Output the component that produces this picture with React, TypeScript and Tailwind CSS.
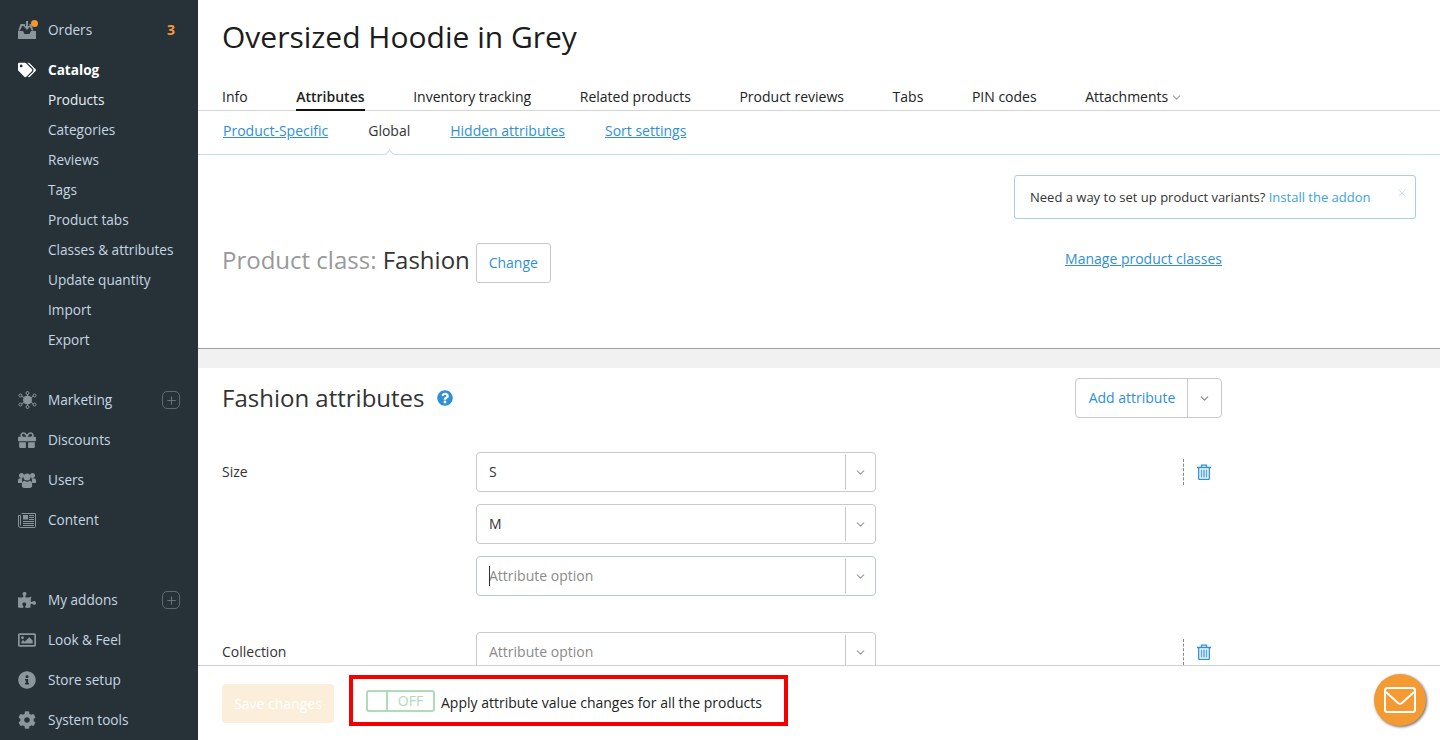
import { ReactNode } from 'react';
import { FaTags, FaGift, FaPuzzlePiece, FaRegImage, FaInfoCircle, FaCog, FaQuestionCircle } from 'react-icons/fa';
import { ChevronDown, Plus, X } from 'lucide-react';

const font = "font-['Open_Sans',sans-serif]";

const catalogItems = ['Products', 'Categories', 'Reviews', 'Tags', 'Product tabs', 'Classes & attributes', 'Update quantity', 'Import', 'Export'];
const tabs = ['Info', 'Attributes', 'Inventory tracking', 'Related products', 'Product reviews', 'Tabs', 'PIN codes'];

function OrdersIcon() {
  return (
    <svg width="18" height="18" viewBox="0 0 18 18" fill="#8a959c">
      <path d="M0 10h5l1.500 3h5l1.500-3h5v8H0z" />
      <path d="M2.500 3H7v2H4.200L2 9.500H.3zM11.500 3H13l2.500 6.500h-1.800L11.500 5z" />
      <path d="M8 0h2v5h2.500L9 9 5.500 5H8z" />
    </svg>
  );
}

function MarketingIcon() {
  return (
    <svg width="19" height="18" viewBox="0 0 19 18" fill="none" stroke="#8a959c" strokeWidth="1">
      <circle cx="9.500" cy="9" r="4" fill="#8a959c" />
      <path d="M9.500 3v3M9.500 12v3M3.500 5l3 2M15.500 5l-3 2M3.500 13l3-2M15.500 13l-3-2" />
      <circle cx="9.500" cy="2" r="1.500" />
      <circle cx="9.500" cy="16" r="1.500" />
      <circle cx="2.500" cy="4.500" r="1.500" />
      <circle cx="16.500" cy="4.500" r="1.500" />
      <circle cx="2.500" cy="13.500" r="1.500" />
      <circle cx="16.500" cy="13.500" r="1.500" />
    </svg>
  );
}

function UsersIcon() {
  return (
    <svg width="18" height="16" viewBox="0 0 18 16" fill="#8a959c">
      <circle cx="3.500" cy="3.500" r="2.500" />
      <circle cx="14.500" cy="3.500" r="2.500" />
      <path d="M0 11V8.500C0 7 1 6.300 2.500 6.300h2c-.3.600-.5 1.300-.5 2 0 1 .4 2 1 2.700H0zM18 11V8.500c0-1.500-1-2.200-2.500-2.200h-2c.3.600.5 1.300.5 2 0 1-.4 2-1 2.700h5z" />
      <circle cx="9" cy="5" r="3.500" />
      <path d="M3.800 13.500c0-3 1.200-4.800 2.700-4.800.8.600 1.600 1 2.500 1s1.700-.4 2.500-1c1.500 0 2.700 1.800 2.700 4.800 0 1.500-1 2.500-2.500 2.500h-5.400c-1.500 0-2.500-1-2.500-2.500z" />
    </svg>
  );
}

function NewspaperIcon() {
  return (
    <svg width="18" height="16" viewBox="0 0 18 16" fill="none" stroke="#8a959c" strokeWidth="1">
      <path d="M3.500 1.500h14v13a1 1 0 0 1-1 1h-14a2 2 0 0 1-2-2V3.500h2v10" />
      <rect x="5" y="3" width="5" height="4.500" fill="#8a959c" stroke="none" />
      <path d="M11 3.500h5M11 5.500h5M11 7.500h5M5 9.500h11M5 11.500h11M5 13.500h11" />
    </svg>
  );
}

function TrashIcon() {
  return (
    <svg width="14" height="16" viewBox="0 0 14 16" fill="none" stroke="#2f8fd8" strokeWidth="1.300">
      <path d="M0 3.500h14M4.500 3.500V1.200h5v2.300" />
      <path d="M1.700 3.500v11a1 1 0 0 0 1 1h8.600a1 1 0 0 0 1-1v-11" />
      <path d="M4.500 5.500v8M7 5.500v8M9.500 5.500v8" strokeWidth="1.600" stroke="#5fa9e2" />
    </svg>
  );
}

function NavRow({ icon, label, right }: { icon: ReactNode; label: string; right?: ReactNode }) {
  return (
    <div className="flex h-10 items-center pl-[18px] pr-[18px]">
      <div className="flex w-[30px] shrink-0 items-center">{icon}</div>
      <span className="flex-1 text-[13.6px] text-[#c6d6e2]">{label}</span>
      {right}
    </div>
  );
}

function PlusBox() {
  return (
    <div className="flex h-[18px] w-[18px] items-center justify-center rounded-[5px] border border-[#5d6a71]">
      <Plus size={13} color="#66737a" />
    </div>
  );
}

function Sidebar() {
  const iconClass = 'text-[#8a959c] text-[18px]';
  return (
    <aside className="flex w-[198px] shrink-0 flex-col bg-[#263238] pt-[10px]">
      <NavRow icon={<div className="relative"><OrdersIcon /><span className="absolute -right-[2px] -top-[1px] h-[7px] w-[7px] rounded-full bg-[#f5962c]" /></div>} label="Orders" right={<span className="pr-[5px] text-sm font-bold text-[#f59a33]">3</span>} />
      <div className="mt-[5px] flex h-[30px] items-center pl-[18px]">
        <div className="flex w-[30px] items-center"><FaTags className="text-[18px] text-white" /></div>
        <span className="text-[13.6px] font-bold text-white">Catalog</span>
      </div>
      <div className="flex flex-col pl-12">
        {catalogItems.map((item, i) => (
          <div key={item} className={`flex h-[30px] items-center text-[13.6px] ${i === 0 ? 'text-[#e6eef4]' : 'text-[#c6d6e2]'}`}>{item}</div>
        ))}
      </div>
      <div className="mt-[25px]">
        <NavRow icon={<MarketingIcon />} label="Marketing" right={<PlusBox />} />
        <NavRow icon={<FaGift className={iconClass} />} label="Discounts" />
        <NavRow icon={<UsersIcon />} label="Users" />
        <NavRow icon={<NewspaperIcon />} label="Content" />
      </div>
      <div className="mt-10">
        <NavRow icon={<FaPuzzlePiece className={iconClass} />} label="My addons" right={<PlusBox />} />
        <NavRow icon={<FaRegImage className={iconClass} />} label="Look & Feel" />
        <NavRow icon={<FaInfoCircle className={iconClass} />} label="Store setup" />
        <NavRow icon={<FaCog className={iconClass} />} label="System tools" />
      </div>
    </aside>
  );
}

function AttributeSelect({ value, placeholder, focused }: { value?: string; placeholder?: string; focused?: boolean }) {
  return (
    <div className={`flex h-10 w-[400px] items-center rounded-[4px] border bg-white ${focused ? 'border-[#b9c8d6]' : 'border-[#c9c9c9]'}`}>
      <div className="relative flex-1 pl-3 text-sm">
        {focused && <span className="absolute left-3 top-0 h-5 w-px bg-[#263238]" />}
        {value ? <span className="text-[#333333]">{value}</span> : <span className="text-[#8a8a8a]">{placeholder}</span>}
      </div>
      <div className="flex h-[34px] w-[30px] items-center justify-center border-l border-[#c9c9c9]">
        <ChevronDown size={13} color="#9a9a9a" />
      </div>
    </div>
  );
}

function AttributeRow({ label, children }: { label: string; children: ReactNode }) {
  return (
    <div className="flex w-[1000px]">
      <div className="flex h-10 w-[254px] items-center text-sm text-[#333333]">{label}</div>
      <div className="flex flex-col gap-3">{children}</div>
      <div className="ml-auto mt-[7px] flex h-[26px] w-[39px] items-center justify-center border-l border-dashed border-[#888888] pl-[2px]">
        <TrashIcon />
      </div>
    </div>
  );
}

export default function App() {
  return (
    <div className={`flex h-[740px] w-[1440px] overflow-hidden bg-white ${font}`}>
      <Sidebar />
      <main className="relative flex min-w-0 flex-1 flex-col">
        <div className="min-h-0 flex-1 overflow-hidden">
          <h1 className="pl-6 pt-[17px] text-[30px] leading-10 text-[#1c1c1c]">Oversized Hoodie in Grey</h1>

          <div className="mt-[26px] flex h-[28px] gap-[48.6px] border-b border-[#d5d5d5] pl-6 pt-1 text-sm text-[#222222]">
            {tabs.map((tab) => (
              <div key={tab} className={`h-[24px] leading-5 ${tab === 'Attributes' ? 'border-b-2 border-[#111111] font-semibold' : ''}`}>{tab}</div>
            ))}
            <div className="flex h-5 items-center gap-0.5">Attachments<ChevronDown size={13} color="#9a9a9a" /></div>
          </div>

          <div className="relative flex h-11 items-center gap-10 border-b border-[#c5dbe9] pb-1 pl-[25px] text-sm">
            <a className="text-[#2f8fd8] underline">Product-Specific</a>
            <span className="text-[#333333]">Global</span>
            <a className="text-[#2f8fd8] underline">Hidden attributes</a>
            <a className="text-[#2f8fd8] underline">Sort settings</a>
            <span className="absolute bottom-[-4px] left-[188px] h-[7px] w-[7px] rotate-45 border-l border-t border-[#c5dbe9] bg-white" />
          </div>

          <section className="h-[194px] border-b border-[#9e9e9e] shadow-[0_1px_2px_rgba(0,0,0,0.2)]">
            <div className="flex justify-end pr-6 pt-5">
              <div className="relative flex h-[44px] w-[402px] items-center rounded-[3px] border border-[#a9cfe6] pl-[15px] pt-[2px] text-[13px] text-[#333333]">
                Need a way to set up product variants?&nbsp;<span className="text-[#3aa3dd]">Install the addon</span>
                <X size={12} color="#c9e4f3" className="absolute right-[7px] top-[11px]" />
              </div>
            </div>
            <div className="flex w-[1024px] items-start pl-6 pt-6">
              <div className="text-2xl leading-[34px]">
                <span className="text-[#999999]">Product class: </span><span className="text-[#333333]">Fashion</span>
              </div>
              <button className="ml-[6px] h-10 w-[75px] rounded-[3px] border border-[#c9c9c9] text-sm text-[#2f8fd8]">Change</button>
              <a className="ml-auto text-sm leading-[32px] text-[#2f8fd8] underline">Manage product classes</a>
            </div>
          </section>

          <div className="h-[19px] bg-[#f1f1f1]" />

          <section className="pl-6 pt-[10px]">
            <div className="flex w-[1000px] items-center">
              <h2 className="text-2xl text-[#333333]">Fashion attributes</h2>
              <FaQuestionCircle className="ml-3 text-[16px] text-[#2f8fd8]" />
              <div className="ml-auto flex h-10 w-[147px] items-center rounded-[4px] border border-[#c9c9c9] text-sm text-[#2f8fd8]">
                <span className="flex-1 pl-[1px] text-center">Add attribute</span>
                <div className="flex h-full w-[34px] items-center justify-center border-l border-[#c9c9c9]">
                  <ChevronDown size={13} color="#8a8a8a" />
                </div>
              </div>
            </div>
            <div className="mt-[34px] flex flex-col gap-9">
              <AttributeRow label="Size">
                <AttributeSelect value="S" />
                <AttributeSelect value="M" />
                <AttributeSelect placeholder="Attribute option" focused />
              </AttributeRow>
              <AttributeRow label="Collection">
                <AttributeSelect placeholder="Attribute option" />
              </AttributeRow>
            </div>
          </section>
        </div>

        <footer className="flex h-[75px] shrink-0 items-start border-t border-[#d0d0d0] bg-white pl-6">
          <button className="mt-[18px] h-[39px] w-[112px] rounded-[4px] bg-[#fbeeda] text-sm text-white">Save changes</button>
          <div className="ml-[15px] mt-[9px] flex h-[51px] w-[439px] items-center border-4 border-[#f50000] pl-[13px] text-sm text-[#222222]">
            <div className="flex h-[22px] w-[69px] items-center rounded-[3px] border-2 border-[#aedcb9]">
              <div className="h-full w-5 border-r-2 border-[#aedcb9]" />
              <span className="flex-1 text-center text-sm leading-none text-[#aedcb9]">OFF</span>
            </div>
            <span className="ml-[6px] pt-[5px]">Apply attribute value changes for all the products</span>
          </div>
        </footer>

        <button className="absolute bottom-[14px] right-[14px] flex h-[52px] w-[52px] items-center justify-center rounded-full bg-[#f39a33] shadow-[1px_1px_3px_rgba(0,0,0,0.6)]">
          <svg width="32" height="26" viewBox="0 0 32 26" fill="none" stroke="white" strokeWidth="2" strokeLinejoin="round">
            <rect x="1" y="1" width="30" height="24" rx="2.500" />
            <path d="M2 5l12 11c1.200 1 2.800 1 4 0L30 5" />
          </svg>
        </button>
      </main>
    </div>
  );
}
